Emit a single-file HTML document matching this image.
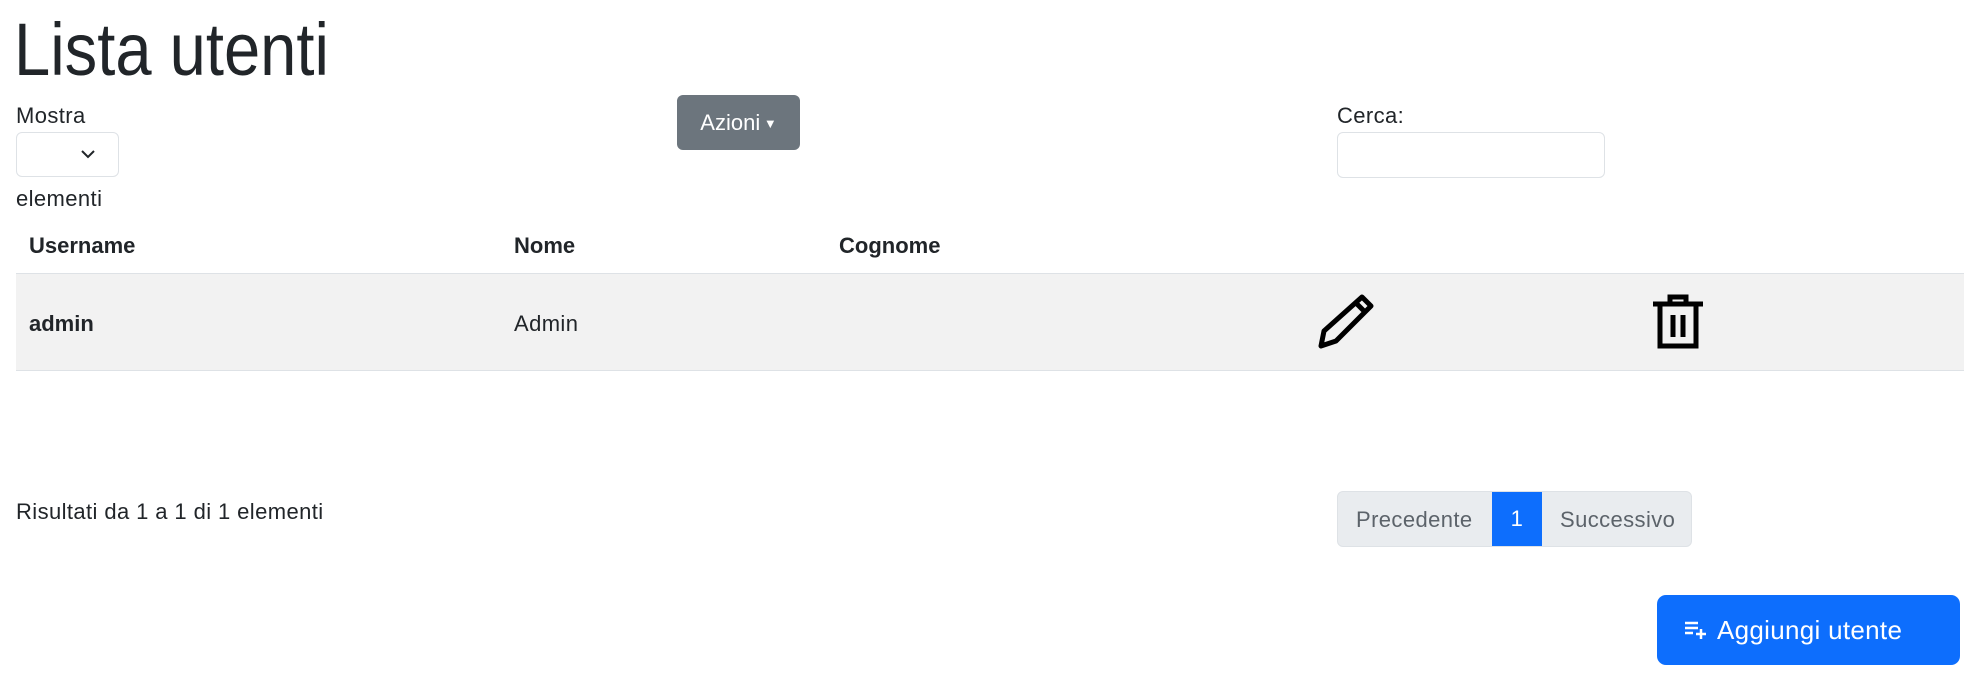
<!DOCTYPE html>
<html><head><meta charset="utf-8"><style>
body{margin:0;width:1987px;height:684px;background:#fff;font-family:"Liberation Sans",sans-serif;font-size:22px;letter-spacing:0.4px;color:#212529;position:relative;overflow:hidden}
.a{position:absolute;white-space:nowrap}
h1{position:absolute;left:14px;top:10px;margin:0;font-weight:300;font-size:74px;line-height:80px;letter-spacing:0;color:#212529;transform:scaleX(.88);transform-origin:left}
.sel{left:16px;top:132px;width:101px;height:43px;border:1px solid #dee2e6;border-radius:6px}
.inp{left:1337px;top:132px;width:266px;height:44px;border:1px solid #dee2e6;border-radius:6px}
.btn{left:677px;top:95px;width:123px;height:55px;background:#6c757d;border-radius:6px;color:#fff;line-height:55px;text-align:center;letter-spacing:0}
.row{left:16px;top:273px;width:1948px;height:96px;background:#f2f2f2;border-top:1px solid #dee2e6;border-bottom:1px solid #dee2e6}
b{font-weight:bold;letter-spacing:0}
.pg{left:1337px;top:491px;height:54px;width:353px;border:1px solid #dee2e6;border-radius:6px;background:#e9ecef;overflow:hidden;color:#5c636a}
.add{left:1657px;top:595px;width:303px;height:70px;background:#0d6efd;border-radius:9px;color:#fff;font-size:26px;letter-spacing:0.3px;line-height:70px}
</style></head><body>
<h1>Lista utenti</h1>
<div class="a" style="left:16px;top:103px">Mostra</div>
<div class="a sel"><svg style="position:absolute;left:63px;top:16px" width="16" height="10" viewBox="0 0 16 10"><path d="M2 2l6 6 6-6" fill="none" stroke="#212529" stroke-width="2"/></svg></div>
<div class="a" style="left:16px;top:186px">elementi</div>
<div class="a btn">Azioni<span style="font-size:13px;vertical-align:2px"> ▼</span></div>
<div class="a" style="left:1337px;top:103px">Cerca:</div>
<div class="a inp"></div>
<div class="a" style="left:29px;top:233px"><b>Username</b></div>
<div class="a" style="left:514px;top:233px"><b>Nome</b></div>
<div class="a" style="left:839px;top:233px"><b>Cognome</b></div>
<div class="a row"></div>
<div class="a" style="left:29px;top:311px"><b>admin</b></div>
<div class="a" style="left:514px;top:311px">Admin</div>
<svg class="a" style="left:1316px;top:293px" width="58" height="58" viewBox="0 0 58 58"><path d="M46 4l9 9L20 48 5 53l3-15z M40 10l9 9" fill="none" stroke="#000" stroke-width="5" stroke-linejoin="round"/></svg>
<svg class="a" style="left:1650px;top:292px" width="56" height="60" viewBox="0 0 56 60"><path d="M3 12h50 M20 12V5h16v7 M10 12v42h36V12 M23 23v22 M33 23v22" fill="none" stroke="#000" stroke-width="5"/></svg>
<div class="a" style="left:16px;top:499px">Risultati da 1 a 1 di 1 elementi</div>
<div class="a pg"><span class="a" style="left:18px;top:15px">Precedente</span><span class="a" style="left:154px;top:0;width:50px;height:54px;background:#0d6efd;color:#fff;text-align:center;line-height:54px">1</span><span class="a" style="left:222px;top:15px">Successivo</span></div>
<div class="a add"><svg style="position:absolute;left:28px;top:25px" width="22" height="20" viewBox="0 0 22 20"><path d="M0 3h13M0 8h13M0 13h8M11 14h10M16 9v10" stroke="#fff" stroke-width="2.5" fill="none"/></svg><span style="position:absolute;left:60px">Aggiungi utente</span></div>
</body></html>
